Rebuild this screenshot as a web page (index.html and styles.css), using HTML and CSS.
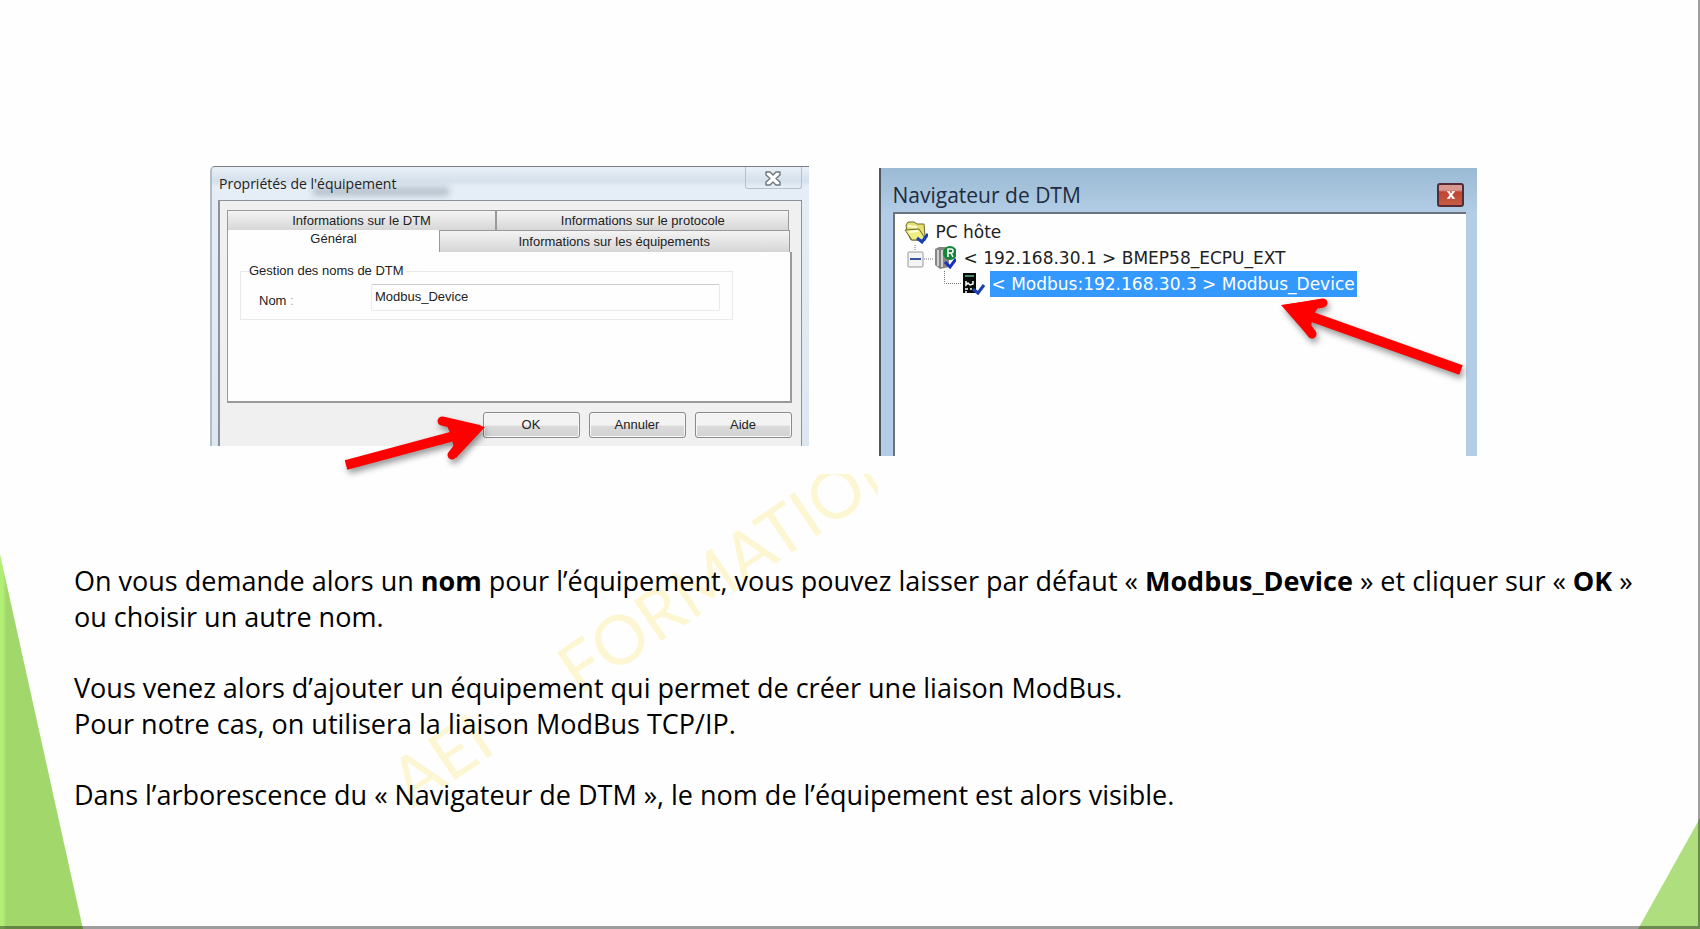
FILE: index.html
```html
<!DOCTYPE html>
<html lang="fr">
<head>
    <meta charset="UTF-8">
    <meta name="viewport" content="width=device-width, initial-scale=1.0">
    <title>Navigateur de DTM</title>
    <link rel="stylesheet" href="styles.css">
</head>
<body>
    <main class="slide">
        <div class="watermark" aria-hidden="true">
            <div class="watermark-text"><span>AEI</span><span>FORMATION</span></div>
        </div>
        <div class="corner corner-left"></div>
        <div class="corner corner-right"></div>

        <div class="figures">
            <section class="dialog">
                <header class="dialog-title">
                    <span>Propriétés de l'équipement</span>
                    <button class="dialog-close" type="button" aria-label="Fermer">
                        <svg width="16" height="15" viewBox="0 0 16 15">
                            <path d="M1 1h4l3 3 3-3h4v3l-4 3.500 4 3.500v3h-4l-3-3-3 3H1v-3l4-3.500L1 4z" fill="#fff" stroke="#6d747c" stroke-width="1.4" stroke-linejoin="round"/>
                        </svg>
                    </button>
                </header>
                <div class="dialog-body">
                    <div class="tabs tabs-back">
                        <button class="tab" type="button">Informations sur le DTM</button>
                        <button class="tab" type="button">Informations sur le protocole</button>
                    </div>
                    <div class="tabs tabs-front">
                        <button class="tab tab-active" type="button">Général</button>
                        <button class="tab" type="button">Informations sur les équipements</button>
                    </div>
                    <div class="panel">
                        <fieldset class="group">
                            <legend>Gestion des noms de DTM</legend>
                            <label for="nom">Nom <i>:</i></label>
                            <input id="nom" type="text" value="Modbus_Device">
                        </fieldset>
                    </div>
                    <div class="actions">
                        <button type="button">OK</button>
                        <button type="button">Annuler</button>
                        <button type="button">Aide</button>
                    </div>
                </div>
                <svg class="arrow arrow-ok" width="160" height="68" viewBox="0 0 160 68">
                    <path d="M7 59L130 26" stroke="#fe0000" stroke-width="10" fill="none"/>
                    <path d="M103 15L134 22L113 49" stroke="#fe0000" stroke-width="9" stroke-linecap="round" fill="none"/>
                    <path d="M146 21L104 11L112 29L117 52z" fill="#fe0000"/>
                </svg>
            </section>

            <section class="navigator">
                <header class="nav-title">
                    <span>Navigateur de DTM</span>
                    <button class="nav-close" type="button" aria-label="Fermer">
                        <svg width="8" height="8" viewBox="0 0 10 10">
                            <path d="M2 1l6 8M8 1L2 9" stroke="#fff" stroke-width="2.4"/>
                            <path d="M0 1h4M6 1h4M0 9h4M6 9h4" stroke="#fff" stroke-width="1.4"/>
                        </svg>
                    </button>
                </header>
                <ul class="tree">
                    <li class="row">
                        <svg width="24" height="24" viewBox="0 0 24 24">
                            <path d="M2 5l2-3h6l3 2h7l1 12-4 4H7L3 12z" fill="#e4e26c" stroke="#6b6a31"/>
                            <path d="M1 10l14-1 7 11H8z" fill="#f0ee80" stroke="#6b6a31"/>
                            <path d="M4 6l9 1M5 12l9-1" stroke="#fffde0" stroke-width="2"/>
                            <path d="M13 18l5 4 6-8" fill="none" stroke="#1b3fb0" stroke-width="3"/>
                        </svg>
                        <span>PC hôte</span>
                    </li>
                    <li class="row row-cpu">
                        <svg width="52" height="26" viewBox="0 0 52 26">
                            <path d="M11 0v5M20 14h9" stroke="#777" stroke-dasharray="1 1"/>
                            <rect x="4" y="7" width="15" height="15" rx="1" fill="#f4f4f4" stroke="#999"/>
                            <path d="M6 14h11" stroke="#3a55a0" stroke-width="2"/>
                            <path d="M31 4l4-2h10v20l-9 2-5-4z" fill="#858585"/>
                            <path d="M34 5v16M38 5v17" stroke="#d0d0d0" stroke-width="2"/>
                            <circle cx="46" cy="8" r="7" fill="#128536"/>
                            <path d="M44 12V4h3a2 2 0 0 1 0 4h-3M47 8l2 4" fill="none" stroke="#fff" stroke-width="1.5"/>
                            <path d="M41 17l5 5 6-8" fill="none" stroke="#1a2fc0" stroke-width="3"/>
                        </svg>
                        <span>&lt; 192.168.30.1 &gt; BMEP58_ECPU_EXT</span>
                    </li>
                    <li class="row row-device">
                        <svg width="42" height="26" viewBox="0 0 42 26">
                            <path d="M1.500 0v12.500H19" fill="none" stroke="#777" stroke-dasharray="1 1"/>
                            <path d="M20 2h13v20H20z" fill="#070b09"/>
                            <path d="M22 5h9" stroke="#4b8668" stroke-width="2"/>
                            <path d="M23 10v4l2-2 2 2 3-1v-3M22 18h3M27 18h2M22 21h2" fill="none" stroke="#fff" stroke-width="1.500"/>
                            <path d="M30 18l5 4 6-8" fill="none" stroke="#1b3fb0" stroke-width="3"/>
                        </svg>
                        <span class="selected">&lt; Modbus:192.168.30.3 &gt; Modbus_Device</span>
                    </li>
                </ul>
                <svg class="arrow arrow-device" width="200" height="90" viewBox="0 0 200 90">
                    <path d="M190 75L30 18" stroke="#fe0000" stroke-width="10" fill="none"/>
                    <path d="M52 8L22 13L41 39" stroke="#fe0000" stroke-width="9" stroke-linecap="round" fill="none"/>
                    <path d="M10 10L52 4L42 21L38 42z" fill="#fe0000"/>
                </svg>
            </section>
        </div>

        <div class="text">
            <p>On vous demande alors un <b>nom</b> pour l’équipement, vous pouvez laisser par défaut «&nbsp;<b>Modbus_Device</b>&nbsp;» et cliquer sur «&nbsp;<b>OK</b>&nbsp;»<br>ou choisir un autre nom.</p>
            <p>Vous venez alors d’ajouter un équipement qui permet de créer une liaison ModBus.<br>Pour notre cas, on utilisera la liaison ModBus TCP/IP.</p>
            <p>Dans l’arborescence du «&nbsp;Navigateur de DTM&nbsp;», le nom de l’équipement est alors visible.</p>
        </div>
    </main>
</body>
</html>
```
FILE: styles.css
```css
* {
    box-sizing: border-box;
}
body {
    margin: 0;
    background-color: #fefefe;
    color: #000;
}
button, input {
    font: inherit;
    color: inherit;
}
.slide {
    position: relative;
    min-height: 100vh;
    padding-top: 166px;
    overflow: hidden;
}
/* shaded right and bottom edges, drawn over the corners */
.slide::after {
    content: "";
    position: absolute;
    inset: 0;
    border: solid rgba(0, 0, 0, 0.38);
    border-width: 0 2px 3px 0;
    pointer-events: none;
}

/* slide background */
.watermark {
    position: absolute;
    left: 0;
    top: 474px;
    width: 878px;
    height: 400px;
    overflow: hidden;
}
.watermark-text {
    position: absolute;
    left: 416px;
    bottom: 58px;
    display: flex;
    gap: 98px;
    font: 68px/68px Lato, sans-serif;
    color: #fdf6d3;
    transform: rotate(-34deg);
    transform-origin: left bottom;
}
.corner {
    position: absolute;
    bottom: 0;
}
.corner-left {
    left: 0;
    width: 83px;
    height: 375px;
    background: linear-gradient(to right, #b1ee74 3px, #a2d86b 6px);
    clip-path: polygon(0 0, 100% 100%, 0 100%);
}
.corner-right {
    right: 0;
    width: 62px;
    height: 111px;
    background-color: #afde7f;
    clip-path: polygon(100% 0, 100% 100%, 0 100%);
}

.figures {
    display: grid;
    grid-template-columns: 1fr 1fr;
    gap: 70px;
    align-items: start;
    margin: 0 223px 0 210px;
}
.arrow {
    position: absolute;
    filter: drop-shadow(2px 4px 3px rgba(0, 0, 0, 0.4));
}

/* properties dialog */
.dialog {
    position: relative;
    height: 280px;
    padding: 0 7px 0 6px;
    border-top: 1px solid #777e86;
    border-left: 2px solid #b4bcc7;
    border-radius: 5px 0 0 0;
    background: linear-gradient(#eaf1f8, #d4e0eb 14px, #e5eef6 20px, #dce7f1);
    font: 13px/16px "Liberation Sans", Arial, sans-serif;
    color: #222;
    display: flex;
    flex-direction: column;
}
.dialog-title {
    position: relative;
    display: flex;
    justify-content: space-between;
    height: 33px;
    padding-left: 1px;
    font: 14px/34px "Open Sans", sans-serif;
}
.dialog-title::before {
    content: "";
    position: absolute;
    left: 95px;
    top: 20px;
    width: 136px;
    height: 9px;
    background-color: #9aa6b2;
    opacity: 0.6;
    filter: blur(3px);
}
.dialog-title span {
    position: relative;
}
.dialog-close {
    width: 57px;
    height: 22px;
    padding: 2px 0 0;
    border: 1px solid #b5c0cb;
    border-top: 0;
    border-radius: 0 0 3px 3px;
    background: none;
    line-height: 0;
}
.dialog-body {
    flex: 1;
    padding: 9px 9px 0 7px;
    border: solid #8b9299;
    border-width: 1px 1px 0 2px;
    background-color: #f0f0f0;
}
.tabs {
    display: grid;
}
.tabs-back {
    grid-template-columns: 268fr 292fr;
    height: 20px;
    margin-right: 2px;
}
.tabs-front {
    grid-template-columns: 211fr 349fr;
    height: 22px;
    margin-right: 2px;
}
.tab {
    padding: 0;
    border: 1px solid #999;
    border-width: 1px 1px 0 1px;
    background: linear-gradient(#f4f4f4, #d5d5d5);
    line-height: 20px;
}
.tab-active {
    padding-bottom: 4px;
    border: 0;
    border-left: 1px solid #999;
    background: #fefefe;
    line-height: 18px;
}
.panel {
    height: 151px;
    padding: 11px 57px 0 12px;
    border: solid #9a9a9a;
    border-width: 0 2px 2px 1px;
    background: #fefefe;
}
.group {
    display: grid;
    grid-template-columns: 112px 1fr;
    align-items: start;
    height: 57px;
    margin: 0;
    padding: 5px 12px 0 18px;
    border: 1px solid #e9e9e9;
}
.group legend {
    margin-left: -10px;
    padding: 0 2px 0 0;
}
.group label {
    padding-top: 9px;
}
.group i {
    color: #aaa;
    font-style: normal;
}
.group input {
    width: 100%;
    height: 27px;
    padding: 0 3px 3px;
    border: 1px solid #eaeaea;
    border-top-color: #ccc;
    border-radius: 2px;
    background: #fefefe;
}
.actions {
    display: flex;
    justify-content: flex-end;
    gap: 9px;
    padding-top: 9px;
}
.actions button {
    width: 97px;
    height: 26px;
    padding: 0;
    border: 1px solid #8a8a8a;
    border-radius: 3px;
    background: linear-gradient(#f3f3f3 50%, #dadada 55%, #d2d2d2);
    box-shadow: inset 0 0 0 1px #f8f8f8;
}
.arrow-ok {
    left: 127px;
    top: 239px;
}

/* DTM browser window */
.navigator {
    position: relative;
    height: 288px;
    margin-top: 2px;
    padding: 0 11px 0 12px;
    border-left: 2px solid #4d555e;
    background: linear-gradient(#9abad3, #b4cde6 46px);
    font: 17px/26px "DejaVu Sans", sans-serif;
    color: #222;
    display: flex;
    flex-direction: column;
}
.nav-title {
    display: flex;
    justify-content: space-between;
    align-items: center;
    height: 44px;
    padding: 10px 2px 0 0;
    font: 21px/30px "Open Sans", sans-serif;
    color: #1d2c40;
}
.nav-close {
    display: grid;
    place-items: center;
    width: 27px;
    height: 24px;
    padding: 0;
    border: 2px solid #552c35;
    border-radius: 3px;
    background: linear-gradient(#d99890 25%, #be4433 35%, #c55c46);
}
.tree {
    flex: 1;
    margin: 0;
    padding: 5px 0 0 9px;
    border: solid #6c737a;
    border-width: 2px 0 0 2px;
    background-color: #fefefe;
    list-style: none;
}
.row {
    display: flex;
    align-items: center;
    gap: 8px;
    height: 26px;
}
.row-device {
    padding-left: 39px;
    gap: 5px;
}
.selected {
    padding: 0 2px;
    background-color: #3399ff;
    color: #fff;
}
.arrow-device {
    left: 390px;
    top: 127px;
}

.text {
    position: relative;
    margin: 107px 50px 0 74px;
    font: 27px/36px "Open Sans", sans-serif;
}
.text p {
    margin: 0 0 35px;
}
```
